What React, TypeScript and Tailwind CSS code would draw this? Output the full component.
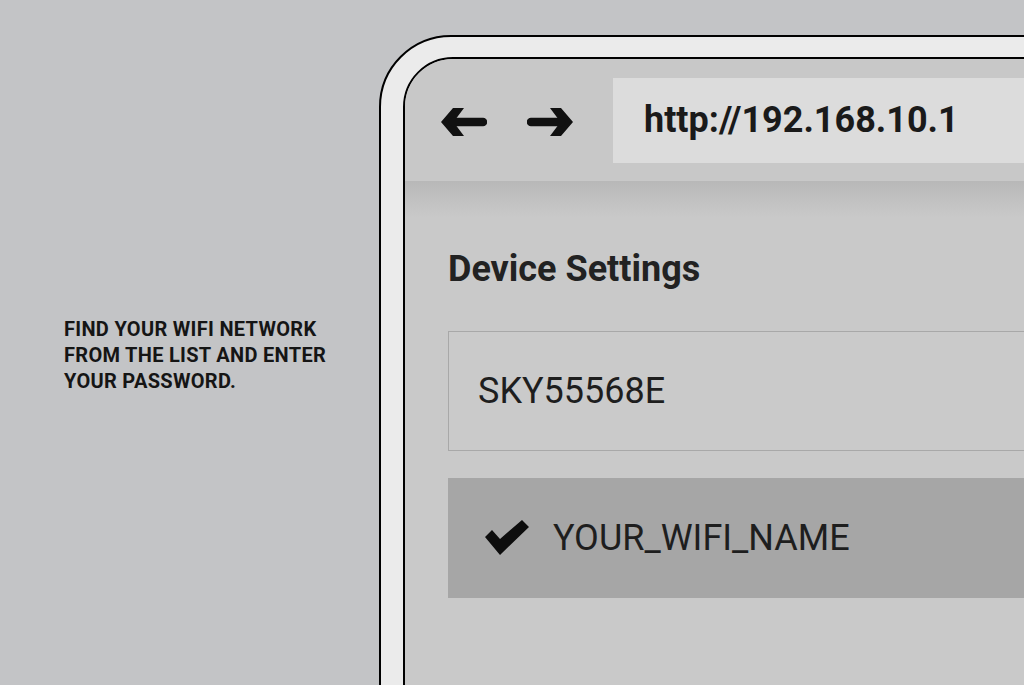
import React from "react";

function LeftArrow() {
  return (
    <svg width="46" height="28" viewBox="0 0 46 28">
      <polygon points="0,14 12,0 23,0 12.5,14 23,28 12,28" fill="#111" />
      <line x1="12" y1="14" x2="42" y2="14" stroke="#111" strokeWidth="8.5" strokeLinecap="round" />
    </svg>
  );
}

function RightArrow() {
  return (
    <svg width="46" height="28" viewBox="0 0 46 28">
      <polygon points="46,14 34,0 23,0 33.5,14 23,28 34,28" fill="#111" />
      <line x1="4" y1="14" x2="34" y2="14" stroke="#111" strokeWidth="8.5" strokeLinecap="round" />
    </svg>
  );
}

function Check() {
  return (
    <svg width="45" height="36" viewBox="0 0 45 36">
      <polygon points="0,17 7,10 15,19 37,0 44,7 15,35" fill="#0d0d0d" />
    </svg>
  );
}

export default function App() {
  return (
    <div
      className="w-[1024px] h-[685px] overflow-hidden flex bg-[#c3c4c6]"
      style={{ fontFamily: "Roboto, 'Liberation Sans', sans-serif" }}
    >
      <div className="w-[379px] shrink-0 pl-[64px] pt-[316px]">
        <p className="text-[20px] leading-[26px] font-bold tracking-[0.3px] text-[#151515] uppercase">
          Find your wifi network
          <br />
          from the list and enter
          <br />
          your password.
        </p>
      </div>
      <div className="shrink-0 mt-[35px] w-[800px] h-[800px] border-2 border-black rounded-tl-[72px] bg-[#ebebeb] pt-[20px] pl-[22px]">
        <div className="w-full h-full border-2 border-black rounded-tl-[50px] bg-[#c9c9c9] overflow-hidden flex flex-col">
          <div className="h-[122px] shrink-0 bg-[#c8c8c8] flex items-center">
            <div className="flex items-center gap-[40px] pl-[36px] pt-[3px]">
              <LeftArrow />
              <RightArrow />
            </div>
            <div className="ml-[40px] h-[85px] flex-1 bg-[#dcdcdc] flex items-center pl-[31px]">
              <span className="text-[36px] font-bold text-[#1a1a1a]">
                http://192.168.10.1
              </span>
            </div>
          </div>
          <div className="flex-1 bg-[linear-gradient(to_bottom,#b8b8b8,#c9c9c9_36px)] pl-[43px] pt-[64px]">
            <h1 className="text-[36px] leading-[48px] font-bold text-[#222]">Device Settings</h1>
            <div className="mt-[38px] h-[120px] border border-[#a8a8a8] bg-[#cacaca] flex items-center pl-[29px]">
              <span className="text-[36px] text-[#1e1e1e]">SKY55568E</span>
            </div>
            <div className="mt-[27px] h-[120px] bg-[#a6a6a6] flex items-center pl-[37px]">
              <Check />
              <span className="ml-[23px] text-[36px] text-[#1e1e1e]">YOUR_WIFI_NAME</span>
            </div>
          </div>
        </div>
      </div>
    </div>
  );
}
